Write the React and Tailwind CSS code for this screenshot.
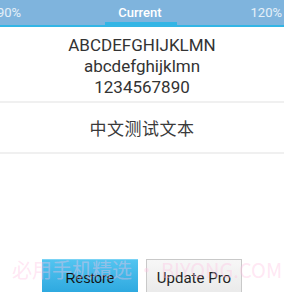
import React from 'react';

const tabs = ['90%', 'Current', '120%'];

export default function App() {
  return (
    <div className="relative w-[284px] h-[292px] overflow-hidden bg-white font-['Roboto',sans-serif]">
      {/* Tab bar */}
      <div className="relative h-[27px] bg-[#7fb4dd] border-b-2 border-[#33b5e5]">
        <div className="flex h-[25px] items-center justify-between text-[13px] leading-none">
          <span className="-ml-[3px] text-white/80">{tabs[0]}</span>
          <span className="ml-[8px] font-medium text-white">{tabs[1]}</span>
          <span className="mr-[2px] text-white/80">{tabs[2]}</span>
        </div>
        <div className="absolute left-[105px] bottom-[-2px] h-[5px] w-[72px] bg-[#33b5e5]" />
      </div>

      {/* Sample text */}
      <div className="flex flex-col items-center pt-[8px] pb-[3px] text-[17px] leading-[21px] text-[#333]">
        <span>ABCDEFGHIJKLMN</span>
        <span>abcdefghijklmn</span>
        <span>1234567890</span>
      </div>
      <div className="h-[2px] bg-[#f0f0f0]" />
      <div className="flex h-[49px] items-center justify-center tracking-[0.5px] text-[17px] text-[#3a3a3a] font-['Noto_Sans_CJK_SC',sans-serif]">
        中文测试文本
      </div>
      <div className="h-[2px] bg-[#f0f0f0]" />

      {/* Buttons */}
      <div className="mt-[105px] flex justify-center gap-[8px]">
        <button className="h-[38px] w-[96px] bg-gradient-to-b from-[#52c4f0] to-[#27a5dd] border-t border-[#7ad3f5] text-[14px] text-[#111] font-['Liberation_Sans',sans-serif]">
          Restore
        </button>
        <button className="h-[38px] w-[96px] border border-[#c9c9c9] bg-gradient-to-b from-[#f7f7f7] to-[#e9e9e9] text-[15px] text-[#222]">
          Update Pro
        </button>
      </div>

      {/* Watermark */}
      <div className="pointer-events-none absolute left-[12px] top-[258px] whitespace-nowrap text-[20px] leading-[24px] text-[#ffc2e2]/40 font-['Noto_Sans_CJK_SC',sans-serif]">
        必用手机精选 • BIYONG.COM
      </div>
    </div>
  );
}
